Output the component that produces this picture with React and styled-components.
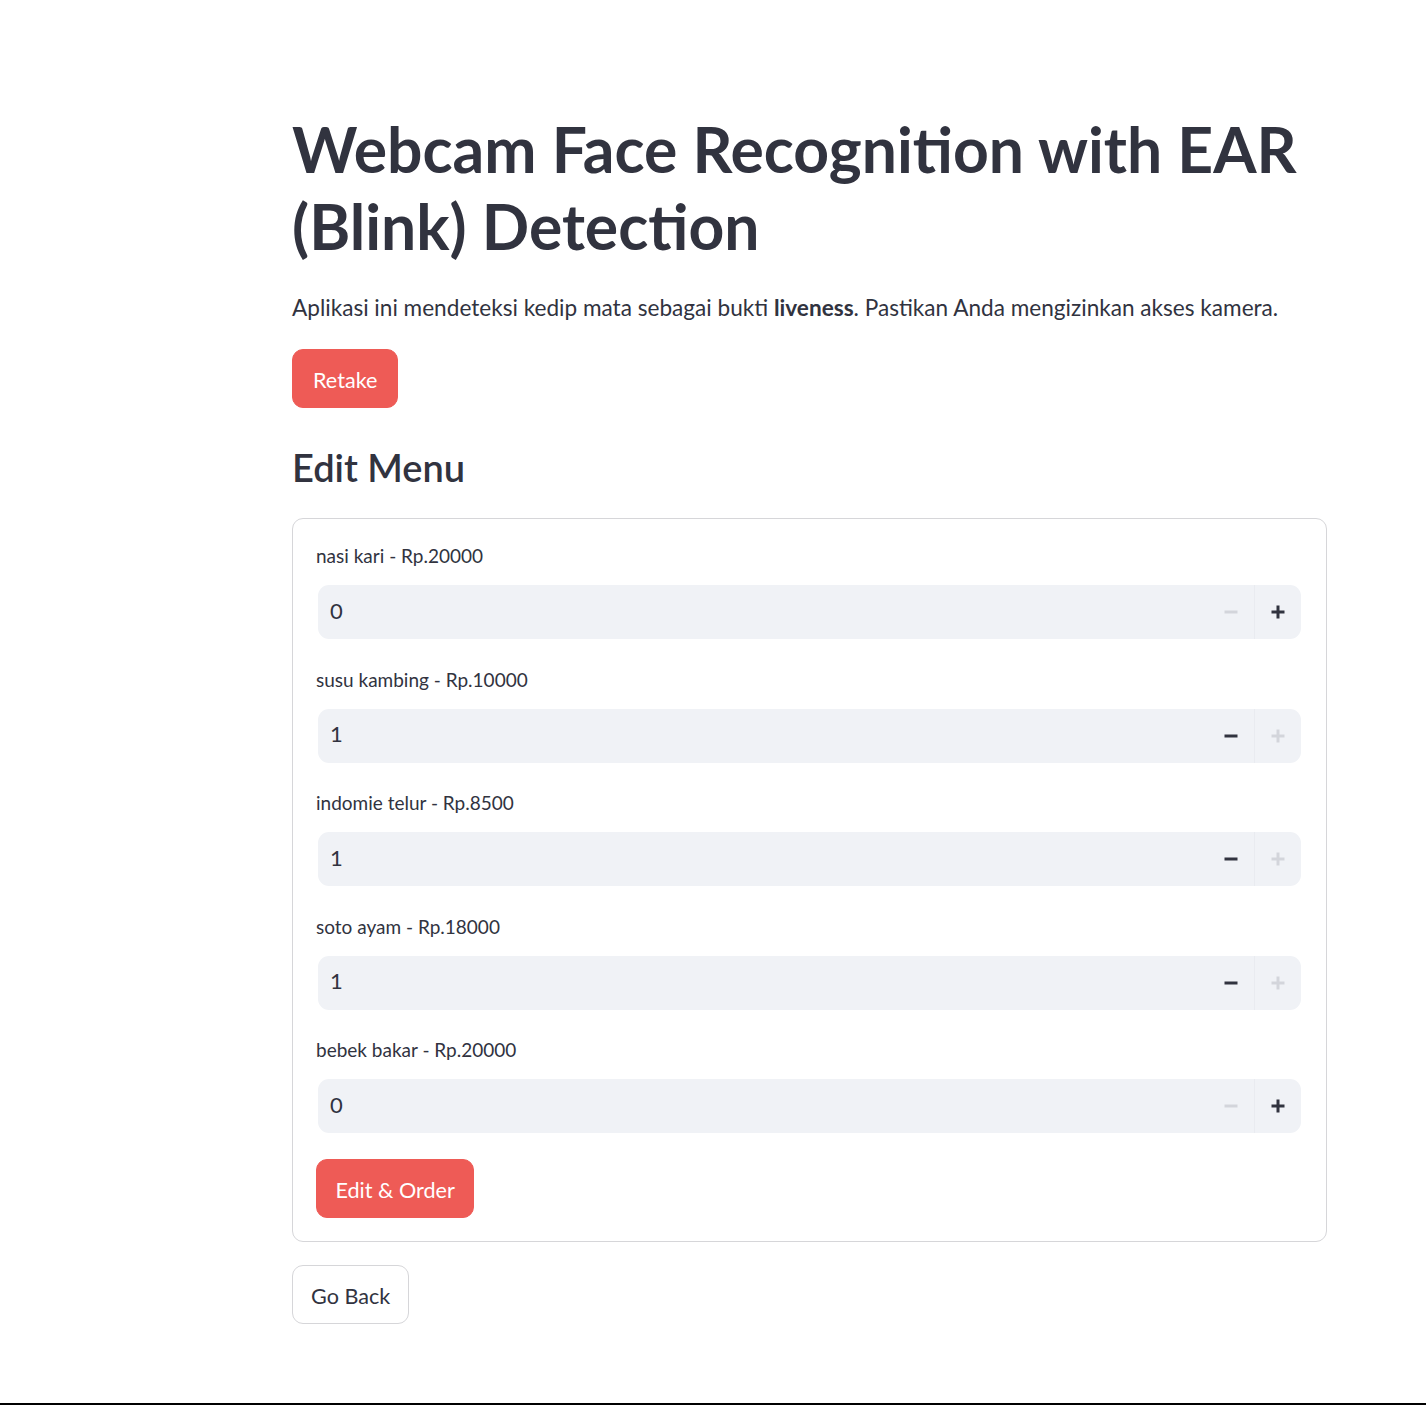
import React from "react";
import styled, { createGlobalStyle } from "styled-components";

const Global = createGlobalStyle`
  html, body { margin: 0; padding: 0; background: #ffffff; }
  body { font-family: Lato, "Open Sans", sans-serif; color: #31333F; }
  * { box-sizing: border-box; }
`;

const Page = styled.div`
  min-height: 1405px;
  display: flex;
  flex-direction: column;
`;

const Main = styled.main`
  flex: 1;
  padding: 110px 0 0 292px;
`;

const Bottom = styled.div`
  height: 2px;
  background: #000;
`;

const Block = styled.div`
  width: 1035px;
  display: flex;
  flex-direction: column;
  align-items: flex-start;
`;

const Title = styled.h1`
  margin: 0;
  font-size: 62.4px;
  line-height: 77px;
  font-weight: 700;
  color: #31333F;
  white-space: nowrap;
`;

const Para = styled.p`
  margin: 26px 0 0;
  font-size: 22.6px;
  line-height: 36px;
  color: #31333F;
  white-space: nowrap;
  b { font-weight: 700; }
`;

const Button = styled.button`
  height: 59px;
  padding: 2px ${(p) => p.$px || 20}px 0;
  border-radius: 11px;
  font-family: inherit;
  font-size: 21.6px;
  cursor: pointer;
  margin-top: ${(p) => p.$mt || 0}px;
  background: ${(p) => (p.$primary ? "#EE5B56" : "#ffffff")};
  color: ${(p) => (p.$primary ? "#ffffff" : "#31333F")};
  border: 1px solid ${(p) => (p.$primary ? "#EE5B56" : "#d6d6d9")};
`;

const Heading = styled.h3`
  margin: 36px 0 0;
  font-size: 38px;
  line-height: 47px;
  font-weight: 600;
  color: #31333F;
`;

const Form = styled.div`
  margin-top: 27px;
  width: 1035px;
  border: 1px solid #d6d6d9;
  border-radius: 11px;
  padding: 24px 23px 23px 23px;
  display: flex;
  flex-direction: column;
  align-items: flex-start;
`;

const Field = styled.div`
  width: 100%;
  display: flex;
  flex-direction: column;
  margin-bottom: 27.5px;
  &:last-of-type { margin-bottom: 26px; }
`;

const Label = styled.label`
  font-size: 19px;
  line-height: 24px;
  height: 24px;
  padding-top: 1px;
  margin-bottom: 18px;
  color: #31333F;
`;

const InputWrap = styled.div`
  margin: 0 2px;
  height: 54px;
  background: #f0f2f6;
  border-radius: 11px;
  display: flex;
  align-items: center;
  overflow: hidden;
`;

const Value = styled.div`
  flex: 1;
  padding: 0 0 4px 12px;
  font-size: 22px;
  color: #31333F;
`;

const Step = styled.div`
  width: 47px;
  height: 100%;
  display: flex;
  align-items: center;
  justify-content: center;
  border-left: 1px solid ${(p) => (p.$divider ? "#e9ebf0" : "transparent")};
  color: ${(p) => (p.$disabled ? "#d3d5db" : "#31333F")};
`;

const Minus = () => (
  <svg width="14" height="14" viewBox="0 0 14 14">
    <rect x="0.5" y="5.5" width="13" height="3" fill="currentColor" />
  </svg>
);

const Plus = () => (
  <svg width="14" height="14" viewBox="0 0 14 14">
    <rect x="0.5" y="5.5" width="13" height="3" fill="currentColor" />
    <rect x="5.5" y="0.5" width="3" height="13" fill="currentColor" />
  </svg>
);

const items = [
  { label: "nasi kari - Rp.20000", v: 0 },
  { label: "susu kambing - Rp.10000", v: 1 },
  { label: "indomie telur - Rp.8500", v: 1 },
  { label: "soto ayam - Rp.18000", v: 1 },
  { label: "bebek bakar - Rp.20000", v: 0 },
];

export default function App() {
  return (
    <Page>
      <Global />
      <Main>
        <Block>
          <Title>
            Webcam Face Recognition with EAR
            <br />
            (Blink) Detection
          </Title>
          <Para>
            Aplikasi ini mendeteksi kedip mata sebagai bukti <b>liveness</b>. Pastikan Anda mengizinkan akses kamera.
          </Para>
          <Button $primary $mt={23}>Retake</Button>
          <Heading>Edit Menu</Heading>
          <Form>
            {items.map((it) => (
              <Field key={it.label}>
                <Label>{it.label}</Label>
                <InputWrap>
                  <Value>{it.v}</Value>
                  <Step $disabled={it.v === 0}>
                    <Minus />
                  </Step>
                  <Step $divider $disabled={it.v === 1}>
                    <Plus />
                  </Step>
                </InputWrap>
              </Field>
            ))}
            <Button $primary $px={18.5}>Edit &amp; Order</Button>
          </Form>
          <Button $mt={23} $px={18}>Go Back</Button>
        </Block>
      </Main>
      <Bottom />
    </Page>
  );
}
